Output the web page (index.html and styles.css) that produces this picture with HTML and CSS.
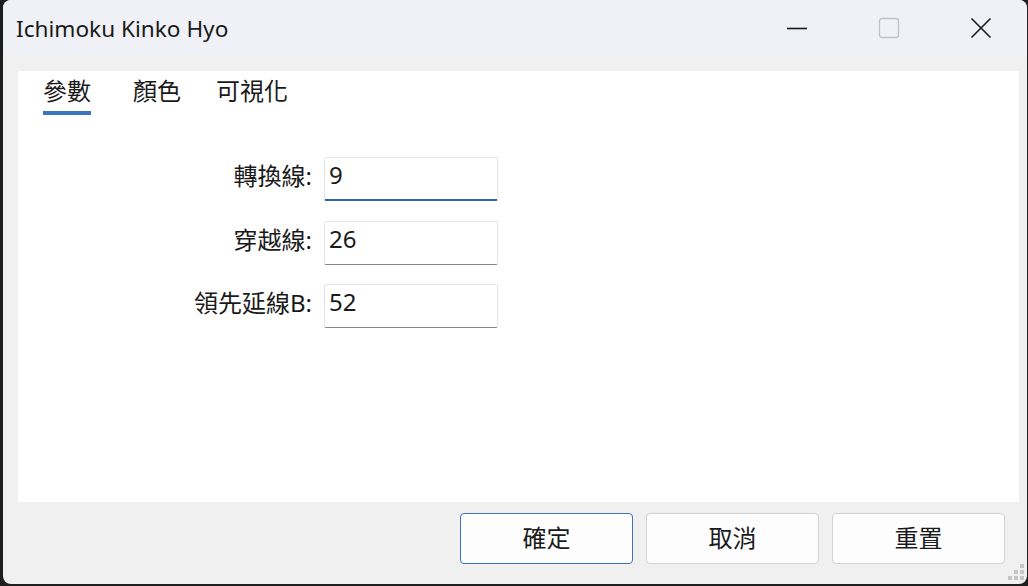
FILE: index.html
```html
<!DOCTYPE html>
<html lang="zh-Hant">
<head>
<meta charset="utf-8">
<title>Ichimoku Kinko Hyo</title>
<link rel="stylesheet" href="styles.css">
</head>
<body>
<div class="window">
  <div class="titlebar">
    <div class="title">Ichimoku Kinko Hyo</div>
    <div class="controls">
      <div class="ctl">
        <svg width="22" height="22" viewBox="0 0 22 22"><path d="M1 11.5H21" stroke="#1a1a1a" stroke-width="1.6"/></svg>
      </div>
      <div class="ctl">
        <svg width="22" height="22" viewBox="0 0 22 22"><rect x="1.5" y="1.5" width="19" height="19" rx="2.5" fill="none" stroke="#c2c2c2" stroke-width="1.3"/></svg>
      </div>
      <div class="ctl">
        <svg width="22" height="22" viewBox="0 0 22 22"><path d="M1.5 1.5L20.5 20.5M20.5 1.5L1.5 20.5" stroke="#1a1a1a" stroke-width="1.6"/></svg>
      </div>
    </div>
  </div>
  <div class="body">
    <div class="panel">
      <div class="tabs">
        <div class="tab active">參數</div>
        <div class="tab tab-color">顏色</div>
        <div class="tab tab-vis">可視化</div>
      </div>
      <div class="form">
        <label class="label">轉換線:</label>
        <div class="field focused">9</div>
        <label class="label">穿越線:</label>
        <div class="field">26</div>
        <label class="label">領先延線B:</label>
        <div class="field">52</div>
      </div>
    </div>
    <div class="footer">
      <button class="btn primary">確定</button>
      <button class="btn">取消</button>
      <button class="btn">重置</button>
    </div>
  </div>
  <div class="grip">
    <svg width="18" height="18" viewBox="0 0 18 18" fill="#c6c6c6">
      <rect x="12" y="0" width="4" height="4"/>
      <rect x="6" y="6" width="4" height="4"/><rect x="12" y="6" width="4" height="4"/>
      <rect x="0" y="12" width="4" height="4"/><rect x="6" y="12" width="4" height="4"/><rect x="12" y="12" width="4" height="4"/>
    </svg>
  </div>
</div>
</body>
</html>
```
FILE: styles.css
```css
* { box-sizing: border-box; }
html, body {
  margin: 0;
  padding: 0;
  width: 1028px;
  height: 586px;
  overflow: hidden;
  background: #1e1e1e;
}
body {
  font-family: "Noto Sans", "Noto Sans CJK TC", sans-serif;
  color: #1a1a1a;
}
.window {
  position: relative;
  margin: 0 1px 0 3px;
  width: 1024px;
  height: 584px;
  background: #f0f0f0;
  border-radius: 8px;
  overflow: hidden;
  display: flex;
  flex-direction: column;
}
.titlebar {
  height: 55px;
  background: #eff1f7;
  display: flex;
  align-items: center;
  flex-shrink: 0;
}
.title {
  padding-left: 13px;
  font-size: 22.6px;
  line-height: 30px;
  flex: 1;
  margin-top: 2px;
}
.controls {
  display: flex;
  height: 55px;
}
.ctl {
  width: 92px;
  height: 55px;
  display: flex;
  align-items: center;
  justify-content: center;
}
.ctl svg { display: block; }
.body {
  flex: 1;
  display: flex;
  flex-direction: column;
  padding: 16px 8px 0 15px;
}
.panel {
  background: #ffffff;
  height: 431px;
  display: flex;
  flex-direction: column;
}
.tabs {
  display: flex;
  padding-left: 25px;
  padding-top: 0;
}
.tab {
  font-size: 24px;
  line-height: 38px;
  height: 44px;
  border-bottom: 4px solid transparent;
  font-family: "Noto Sans CJK TC", sans-serif;
}
.tab.active { border-bottom-color: #3b74bf; }
.tab-color { margin-left: 42px; }
.tab-vis { margin-left: 35px; }
.form {
  display: grid;
  grid-template-columns: 294px 174px;
  column-gap: 12px;
  row-gap: 19.5px;
  margin-top: 42px;
}
.label {
  font-size: 24px;
  text-align: right;
  line-height: 38px;
  height: 44px;
}
.field {
  height: 44px;
  border: 1px solid #e5e5e5;
  border-bottom: 1px solid #868686;
  border-radius: 2px;
  font-size: 24px;
  line-height: 34px;
  padding-left: 4px;
  background: #ffffff;
}
.field.focused {
  border-bottom: 2px solid #2f64ad;
}
.footer {
  display: flex;
  justify-content: flex-end;
  gap: 13px;
  padding-top: 11px;
  padding-right: 14px;
}
.btn {
  width: 173px;
  height: 51px;
  background: #fdfdfd;
  border: 1px solid #d2d2d2;
  border-radius: 4px;
  font-family: "Noto Sans CJK TC", sans-serif;
  font-size: 24px;
  color: #1a1a1a;
  padding: 0 0 5px 0;
}
.btn.primary { border-color: #3d72b8; }
.grip {
  position: absolute;
  right: 1px;
  bottom: 2px;
  width: 18px;
  height: 18px;
}
.grip svg { display: block; }
```
